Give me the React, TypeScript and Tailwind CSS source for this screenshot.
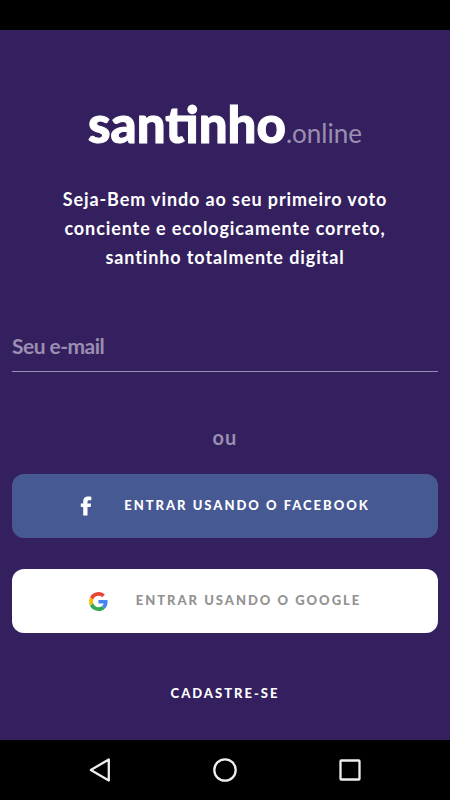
import React, { useCallback, useState } from 'react';

const FacebookIcon: React.FC = () => (
  <svg className="w-3 h-5" viewBox="0 0 12 20" fill="currentColor" aria-hidden="true">
    <path d="M3.200 19.500v-8.500H.8V7.500h2.400V5.300C3.200 2.300 5 .5 7.900.5c1.300 0 2.600.2 3.400.3v3.400H9.400c-1.500 0-1.900.7-1.900 1.700v1.600h3.600l-.5 3.500H7.500v8.500z" />
  </svg>
);

const GoogleIcon: React.FC = () => (
  <svg className="w-[19px] h-[19px]" viewBox="0 0 48 48" aria-hidden="true">
    <path
      fill="#ea4335"
      d="M24 9.500c3.540 0 6.710 1.220 9.210 3.600l6.850-6.850C35.900 2.380 30.470 0 24 0 14.620 0 6.510 5.380 2.560 13.220l7.980 6.190C12.430 13.720 17.740 9.500 24 9.500z"
    />
    <path
      fill="#4285f4"
      d="M46.980 24.550c0-1.570-.15-3.090-.38-4.550H24v9.020h12.940c-.58 2.960-2.260 5.480-4.780 7.180l7.730 6c4.510-4.180 7.090-10.360 7.090-17.650z"
    />
    <path
      fill="#fbbc05"
      d="M10.530 28.590c-.48-1.450-.76-2.990-.76-4.590s.27-3.140.76-4.590l-7.980-6.190C.92 16.460 0 20.120 0 24c0 3.880.92 7.540 2.560 10.780l7.970-6.190z"
    />
    <path
      fill="#34a853"
      d="M24 48c6.480 0 11.930-2.130 15.890-5.810l-7.730-6c-2.150 1.450-4.920 2.300-8.160 2.300-6.260 0-11.570-4.220-13.470-9.910l-7.980 6.190C6.510 42.620 14.620 48 24 48z"
    />
  </svg>
);

const NavigationBar: React.FC = () => (
  <nav className="flex items-center h-[60px] px-[38px] bg-black text-[#eeeeee]">
    <button type="button" aria-label="Voltar" className="flex justify-center flex-1">
      <svg className="w-6 h-6" viewBox="0 0 24 24" fill="none" stroke="currentColor">
        <path d="M20.800 1.500v21L2.800 12z" strokeWidth="2.300" strokeLinejoin="round" />
      </svg>
    </button>
    <button type="button" aria-label="Início" className="flex justify-center flex-1">
      <svg className="w-6 h-6" viewBox="0 0 24 24" fill="none" stroke="currentColor">
        <circle cx="12" cy="12" r="10.700" strokeWidth="2.300" />
      </svg>
    </button>
    <button type="button" aria-label="Recentes" className="flex justify-center flex-1">
      <svg className="w-6 h-6" viewBox="0 0 24 24" fill="none" stroke="currentColor">
        <rect x="2.500" y="2.500" width="19" height="19" rx="0.800" strokeWidth="2.300" />
      </svg>
    </button>
  </nav>
);

const App: React.FC = () => {
  const [email, setEmail] = useState('');

  const onSubmit = useCallback((e: React.FormEvent) => {
    e.preventDefault();
  }, []);

  return (
    <div className="flex flex-col min-h-screen bg-[#35205f] font-['Lato',sans-serif] text-white">
      <div className="h-[30px] bg-black" />

      <main className="flex flex-col flex-1 px-3 pt-[62px]">
        <h1 className="flex items-baseline justify-center leading-[64px]">
          <span className="text-[51px] font-black [-webkit-text-stroke:1px_white]">santinho</span>
          <span className="text-[26px] font-normal text-[#9a8fb0]">.online</span>
        </h1>

        <p className="px-10 mt-5 text-lg font-bold leading-[29px] tracking-wider text-center">
          Seja-Bem vindo ao seu primeiro voto conciente e ecologicamente correto, santinho
          totalmente digital
        </p>

        <form onSubmit={onSubmit} className="mt-[51px]">
          <input
            id="email"
            type="email"
            aria-label="Seu e-mail"
            value={email}
            placeholder="Seu e-mail"
            onChange={(e) => setEmail(e.target.value)}
            className="w-full h-[49px] pb-[3px] text-[21px] font-bold tracking-tight bg-transparent border-b border-[#9a8fb0] placeholder:text-[#9a8fb0] focus:outline-none"
          />
        </form>

        <p className="mt-[50px] text-xl font-bold leading-[30px] tracking-wider text-center text-[#9a8fb0]">
          ou
        </p>

        <div className="mt-[22px] space-y-[31px]">
          <button
            type="button"
            className="flex items-center justify-center w-full h-16 rounded-xl bg-[#475993] text-[13px] font-black tracking-[2px] gap-8"
          >
            <FacebookIcon />
            ENTRAR USANDO O FACEBOOK
          </button>
          <button
            type="button"
            className="flex items-center justify-center w-full h-16 rounded-xl bg-white text-[13px] font-black tracking-[2px] text-[#929292] gap-7"
          >
            <GoogleIcon />
            ENTRAR USANDO O GOOGLE
          </button>
        </div>

        <button
          type="button"
          className="self-center mt-[50px] text-[13px] font-black leading-5 tracking-[2px]"
        >
          CADASTRE-SE
        </button>
      </main>

      <NavigationBar />
    </div>
  );
};

export default App;
